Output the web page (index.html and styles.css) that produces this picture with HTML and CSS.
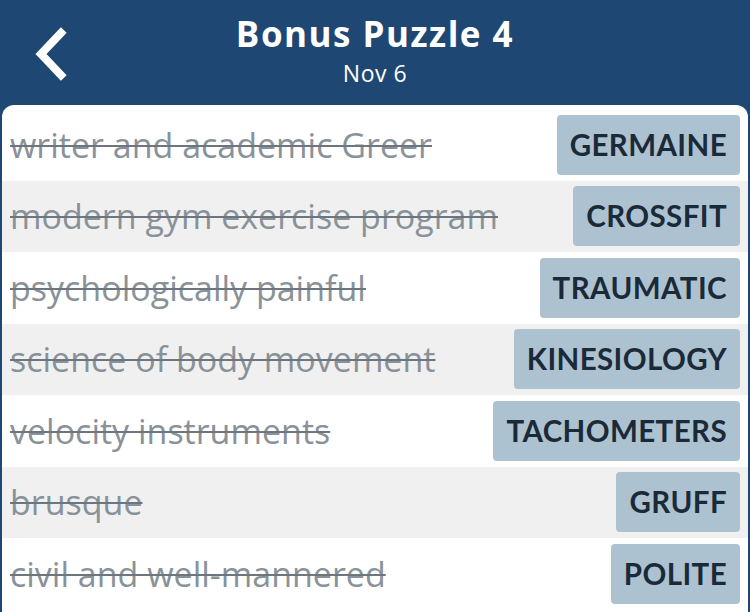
FILE: index.html
```html
<!DOCTYPE html>
<html>
<head>
<meta charset="utf-8">
<link rel="stylesheet" href="styles.css">
</head>
<body>
<div class="app">
  <header class="header">
    <a class="back" aria-label="Back">
      <svg width="40" height="56" viewBox="0 0 40 56"><path d="M29 7 L9 28 L29 49" fill="none" stroke="#fff" stroke-width="8" stroke-linecap="square" stroke-linejoin="miter"/></svg>
    </a>
    <div class="titles">
      <div class="title">Bonus Puzzle 4</div>
      <div class="date">Nov 6</div>
    </div>
  </header>
  <main class="card">
    <div class="row"><span class="clue">writer and academic Greer</span><span class="answer">GERMAINE</span></div>
    <div class="row alt"><span class="clue">modern gym exercise program</span><span class="answer">CROSSFIT</span></div>
    <div class="row"><span class="clue">psychologically painful</span><span class="answer">TRAUMATIC</span></div>
    <div class="row alt"><span class="clue">science of body movement</span><span class="answer">KINESIOLOGY</span></div>
    <div class="row"><span class="clue">velocity instruments</span><span class="answer">TACHOMETERS</span></div>
    <div class="row alt"><span class="clue">brusque</span><span class="answer">GRUFF</span></div>
    <div class="row"><span class="clue">civil and well-mannered</span><span class="answer">POLITE</span></div>
  </main>
</div>
</body>
</html>
```
FILE: styles.css
```css
* { box-sizing: border-box; }
html, body { margin: 0; padding: 0; }
body {
  width: 750px;
  height: 612px;
  overflow: hidden;
  background: #1e4873;
  font-family: "Lato", "Noto Sans", sans-serif;
}
.app { display: flex; flex-direction: column; height: 612px; }
.header {
  position: relative;
  height: 105px;
  flex: none;
  display: flex;
  justify-content: center;
  align-items: flex-start;
  color: #fff;
}
.back {
  position: absolute;
  left: 32px;
  top: 26px;
  display: block;
}
.back svg { display: block; }
.titles { text-align: center; padding-top: 10px; }
.title {
  font-family: "Open Sans", "Lato", sans-serif;
  font-size: 35px;
  font-weight: 700;
  line-height: 48px;
  letter-spacing: 1.5px;
}
.date {
  font-family: "Open Sans", "Lato", sans-serif;
  font-size: 23px;
  line-height: 28px;
  margin-top: 1px;
  letter-spacing: 0.5px;
}
.card {
  flex: 1;
  background: #fff;
  margin: 0 2px;
  border-radius: 12px 12px 0 0;
  padding-top: 4px;
  display: flex;
  flex-direction: column;
}
.row {
  height: 71.5px;
  flex: none;
  display: flex;
  align-items: center;
  justify-content: space-between;
  padding: 0 8px 0 8px;
}
.row.alt { background: #f0f0f0; }
.clue {
  font-family: "Open Sans", "Lato", sans-serif;
  font-size: 34px;
  line-height: 44px;
  color: #899299;
  text-decoration: line-through;
  text-decoration-color: #6d767e;
  text-decoration-thickness: 2px;
  white-space: nowrap;
}
.answer {
  background: #adc2d0;
  color: #1b2a38;
  font-weight: 700;
  font-size: 29.5px;
  height: 60px;
  line-height: 60px;
  padding: 0 13px;
  border-radius: 4px;
  letter-spacing: 0.4px;
}
```
